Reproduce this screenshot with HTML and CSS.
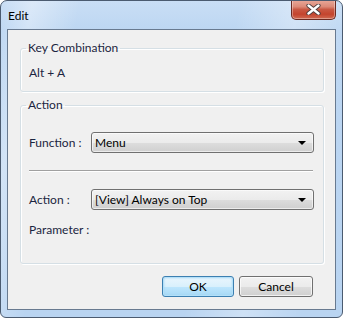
FILE: index.html
```html
<!DOCTYPE html>
<html>
<head>
<meta charset="utf-8">
<link rel="stylesheet" href="styles.css">
</head>
<body>
<div class="window">
  <div class="titlebar">
    <span class="title">Edit</span>
    <button class="close" aria-label="Close">
      <svg width="15" height="11" viewBox="0 0 15 11">
        <path d="M2.5 1.5 L12.5 9.5 M12.5 1.5 L2.5 9.5" stroke="#4a3a3a" stroke-width="4.2" stroke-linecap="round" fill="none"/>
        <path d="M2.5 1.5 L12.5 9.5 M12.5 1.5 L2.5 9.5" stroke="#ffffff" stroke-width="2.4" stroke-linecap="round" fill="none"/>
      </svg>
    </button>
  </div>
  <div class="client">
    <fieldset class="group group-key">
      <legend>Key Combination</legend>
      <div class="keys">Alt + A</div>
    </fieldset>
    <fieldset class="group group-action">
      <legend>Action</legend>
      <div class="row">
        <span class="label">Function :</span>
        <div class="combo"><span class="value">Menu</span><span class="arrow"></span></div>
      </div>
      <div class="sep"></div>
      <div class="row">
        <span class="label">Action :</span>
        <div class="combo"><span class="value">[View] Always on Top</span><span class="arrow"></span></div>
      </div>
      <div class="row row-param">
        <span class="label">Parameter :</span>
      </div>
    </fieldset>
    <div class="buttons">
      <button class="btn btn-default">OK</button>
      <button class="btn btn-cancel">Cancel</button>
    </div>
  </div>
</div>
</body>
</html>
```

FILE: styles.css
```css
html, body {
  margin: 0;
  padding: 0;
  background: #ffffff;
}

.window {
  width: 343px;
  height: 318px;
  box-sizing: border-box;
  border: 1px solid #4b5b70;
  border-radius: 7px 7px 6px 6px;
  background:
    linear-gradient(100deg, rgba(255,255,255,0) 0%, rgba(255,255,255,0.35) 8%, rgba(255,255,255,0) 20%, rgba(255,255,255,0) 60%, rgba(255,255,255,0.3) 75%, rgba(255,255,255,0) 90%),
    linear-gradient(180deg, #c9def5 0%, #bcd6f2 30px, #b9d4f1 100%);
  display: flex;
  flex-direction: column;
  font-family: Lato, "Noto Sans", sans-serif;
  font-size: 12px;
  color: #1b2540;
  overflow: hidden;
}

.titlebar {
  height: 28px;
  flex: none;
  display: flex;
  justify-content: space-between;
  align-items: flex-start;
}

.title {
  margin: 7px 0 0 7px;
  font-size: 12px;
  color: #000000;
  line-height: 16px;
}

.close {
  margin: -1px 6px 0 0;
  width: 45px;
  height: 20px;
  padding: 0;
  border: 1px solid #6b2a22;
  border-top: none;
  border-radius: 0 0 5px 5px;
  background: linear-gradient(180deg, #e9a99a 0%, #dc8a78 35%, #c95843 50%, #c4442e 75%, #d06a52 100%);
  box-shadow: inset 0 0 0 1px rgba(255,255,255,0.35);
  display: flex;
  align-items: center;
  justify-content: center;
}

.client {
  flex: 1;
  margin: 0 6px 7px 6px;
  border: 1px solid #687a90;
  background: #f0f0f0;
  display: flex;
  flex-direction: column;
  padding: 10px 11px 0 12px;
}

.group {
  margin: 0;
  border: 1px solid #d5dfe5;
  border-radius: 3px;
  box-shadow: inset 1px 1px 0 #ffffff, 1px 1px 0 #ffffff;
  min-width: 0;
}

.group legend {
  padding: 0 2px;
  margin-left: -3px;
  line-height: 16px;
  color: #1b2540;
}

.group-key {
  padding: 9px 8px 10px 8px;
}

.keys {
  line-height: 16px;
}

.group-action {
  margin-top: 5px;
  padding: 19px 10px 23px 8px;
}

.row {
  display: flex;
  align-items: center;
  height: 21px;
}

.label {
  width: 62px;
  flex: none;
}

.combo {
  flex: 1;
  height: 21px;
  box-sizing: border-box;
  border: 1px solid #707070;
  border-radius: 3px;
  background: linear-gradient(180deg, #f2f2f2 0%, #ebebeb 50%, #dddddd 51%, #cfcfcf 100%);
  box-shadow: inset 0 0 0 1px rgba(255,255,255,0.6);
  display: flex;
  align-items: center;
  justify-content: space-between;
  padding: 0 7px 0 3px;
  margin-right: -1px;
  color: #000000;
}

.arrow {
  width: 0;
  height: 0;
  border-left: 4px solid transparent;
  border-right: 4px solid transparent;
  border-top: 4px solid #000000;
}

.sep {
  height: 1px;
  background: #a0a0a0;
  border-bottom: 1px solid #ffffff;
  margin: 17px 0 17px 0;
}

.row-param {
  margin-top: 9px;
}

.buttons {
  display: flex;
  justify-content: flex-end;
  gap: 5px;
  margin-top: 12px;
  padding-right: 11px;
}

.btn {
  height: 21px;
  box-sizing: border-box;
  padding: 0;
  font-family: Lato, "Noto Sans", sans-serif;
  font-size: 12px;
  color: #000000;
  border-radius: 3px;
}

.btn-default {
  width: 72px;
  border: 1px solid #3c7fb1;
  background: linear-gradient(180deg, #eaf6fd 0%, #d9f0fc 50%, #bee6fd 51%, #a7d9f5 100%);
  box-shadow: inset 0 0 0 1px #b4e0f8, inset 0 0 2px 1px #9fd3f2;
}

.btn-cancel {
  width: 74px;
  border: 1px solid #707070;
  background: linear-gradient(180deg, #f2f2f2 0%, #ebebeb 50%, #dddddd 51%, #cfcfcf 100%);
  box-shadow: inset 0 0 0 1px rgba(255,255,255,0.7);
}
```
